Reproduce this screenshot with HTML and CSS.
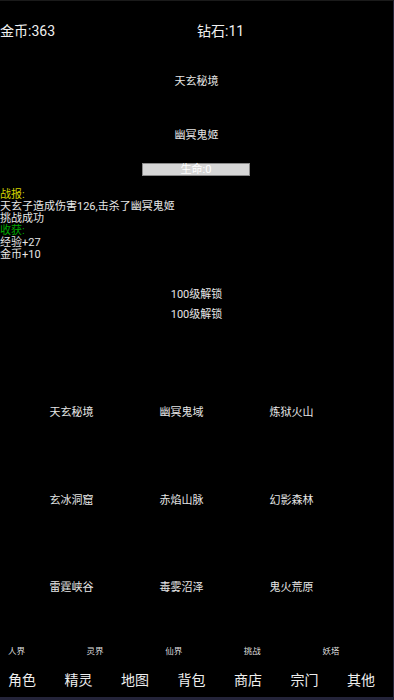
FILE: index.html
```html
<!DOCTYPE html>
<html lang="zh">
<head>
<meta charset="utf-8">
<link rel="stylesheet" href="styles.css">
</head>
<body>
<div class="screen">
  <div class="header">
    <div class="stat">金币:363</div>
    <div class="stat">钻石:11</div>
  </div>
  <div class="title first">天玄秘境</div>
  <div class="title second">幽冥鬼姬</div>
  <div class="hpbar">生命:0</div>
  <div class="log">
    <div class="yellow">战报:</div>
    <div>天玄子造成伤害126,击杀了幽冥鬼姬</div>
    <div>挑战成功</div>
    <div class="green">收获:</div>
    <div>经验+27</div>
    <div>金币+10</div>
  </div>
  <div class="unlocks">
    <div class="unlock">100级解锁</div>
    <div class="unlock">100级解锁</div>
  </div>
  <div class="maps">
    <div class="map">天玄秘境</div>
    <div class="map">幽冥鬼域</div>
    <div class="map">炼狱火山</div>
    <div class="map">玄冰洞窟</div>
    <div class="map">赤焰山脉</div>
    <div class="map">幻影森林</div>
    <div class="map">雷霆峡谷</div>
    <div class="map">毒雾沼泽</div>
    <div class="map">鬼火荒原</div>
  </div>
  <div class="realms">
    <div class="realm">人界</div>
    <div class="realm">灵界</div>
    <div class="realm">仙界</div>
    <div class="realm">挑战</div>
    <div class="realm">妖塔</div>
  </div>
  <div class="nav">
    <div class="tab">角色</div>
    <div class="tab">精灵</div>
    <div class="tab">地图</div>
    <div class="tab">背包</div>
    <div class="tab">商店</div>
    <div class="tab">宗门</div>
    <div class="tab">其他</div>
  </div>
</div>
</body>
</html>
```
FILE: styles.css
```css
html, body {
  margin: 0;
  padding: 0;
  background: #000;
}
body {
  font-family: Roboto, "Noto Sans CJK SC", sans-serif;
  color: #e6e6e6;
}
.screen {
  box-sizing: border-box;
  width: 394px;
  height: 700px;
  background: #000;
  border-top: 1px solid #1a1a1a;
  border-right: 1px solid #26263a;
  border-bottom: 3px solid #24243a;
  overflow: hidden;
}
.header {
  display: grid;
  grid-template-columns: 197px 1fr;
  height: 60px;
  line-height: 60px;
  font-size: 14px;
  color: #f0f0f0;
}
.title {
  text-align: center;
  font-size: 11px;
  height: 20px;
  line-height: 20px;
}
.title.first { margin-top: 11px; }
.title.second { margin-top: 33.5px; }
.hpbar {
  box-sizing: border-box;
  width: 108px;
  height: 13px;
  margin: 17.5px 0 0 142px;
  background: #d6d6d6;
  border: 1px solid #8a8a8a;
  color: #fff;
  font-size: 11px;
  line-height: 11px;
  text-align: center;
}
.log {
  margin-top: 13px;
  font-size: 11px;
  line-height: 12px;
  color: #e6e6e6;
}
.yellow { color: #d2d200; }
.green { color: #00a800; }
.unlocks {
  margin-top: 23.5px;
}
.unlock {
  text-align: center;
  font-size: 11px;
  line-height: 20.5px;
}
.maps {
  display: grid;
  grid-template-columns: repeat(3, 110px);
  grid-auto-rows: 87.5px;
  margin: 42px 0 0 16.5px;
}
.map {
  display: flex;
  align-items: center;
  justify-content: center;
  font-size: 11px;
}
.realms {
  display: grid;
  grid-template-columns: repeat(5, 1fr);
  margin-top: 11.25px;
  height: 20px;
  line-height: 20px;
}
.realm {
  padding-left: 8px;
  font-size: 8.5px;
  color: #dcdcdc;
}
.nav {
  display: flex;
  justify-content: space-between;
  padding: 0 18px 0 8px;
  margin-top: 8.5px;
  height: 20px;
  line-height: 20px;
}
.tab {
  font-size: 14px;
  color: #eeeeee;
}
```
